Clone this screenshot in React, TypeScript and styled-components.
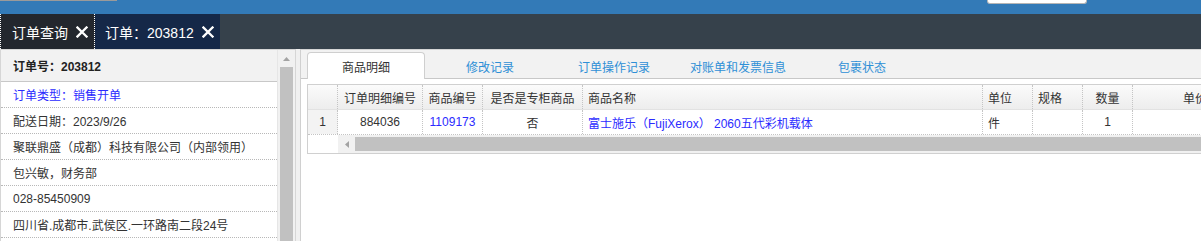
import React from 'react';
import styled, { createGlobalStyle } from 'styled-components';

const GlobalStyle = createGlobalStyle`
  * {
    box-sizing: border-box;
  }

  body {
    margin: 0;
    font-family: 'Liberation Sans', 'Noto Sans CJK SC', sans-serif;
    font-size: 12px;
    color: #333;
    overflow: hidden;
  }
`;

const Page = styled.div`
  width: 1201px;
  height: 241px;
  overflow: hidden;
  background: #f0f0f0;
  display: flex;
  flex-direction: column;
`;

const TopBar = styled.header`
  height: 14px;
  background: #337ab7;
  display: flex;
  align-items: flex-start;
  flex-shrink: 0;
`;

const TopStrip = styled.div`
  width: 117px;
  height: 1px;
  background: #9a9a9a;
`;

const SearchStub = styled.div`
  margin-left: auto;
  margin-right: 114px;
  width: 100px;
  height: 4px;
  background: #fff;
  border: 1px solid #b5b5b5;
  border-top: none;
  border-radius: 0 0 3px 3px;
`;

const TabBar = styled.nav`
  height: 35px;
  background: #36414b;
  display: flex;
  flex-shrink: 0;
`;

const NavTab = styled.div<{ $focused?: boolean; $bg: string }>`
  display: flex;
  align-items: center;
  gap: 8px;
  padding: 0 6px 0 ${(p) => (p.$focused ? '11px' : '10px')};
  background: ${(p) => p.$bg};
  color: #fff;
  font-size: 14px;
  border-left: ${(p) => (p.$focused ? '1px dotted #fff' : 'none')};
  border-right: ${(p) => (p.$focused ? '1px dotted #fff' : 'none')};
`;

const CloseIcon = () => (
  <svg width="12" height="12" viewBox="0 0 12 12">
    <path d="M1.5 1.5 L10.5 10.5 M10.5 1.5 L1.5 10.5" stroke="#fff" strokeWidth="2.3" strokeLinecap="square" />
  </svg>
);

const Main = styled.main`
  flex: 1;
  display: flex;
  gap: 4px;
  min-height: 0;
`;

const InfoPanel = styled.aside`
  width: 296px;
  flex-shrink: 0;
  display: flex;
  background: #fff;
  border: 1px solid #d6d6d6;
  border-bottom: none;
`;

const InfoList = styled.div`
  width: 277px;
  display: flex;
  flex-direction: column;
  overflow: hidden;
  border-right: 1px solid #e6e6e6;
`;

const InfoHeader = styled.div`
  height: 32px;
  flex-shrink: 0;
  display: flex;
  align-items: center;
  padding-left: 12px;
  background: #f2f2f2;
  border-bottom: 1px solid #c8c8c8;
  font-weight: bold;
  color: #222;
`;

const InfoRow = styled.div<{ $link?: boolean }>`
  height: 26px;
  flex-shrink: 0;
  display: flex;
  align-items: center;
  padding-left: 12px;
  border-bottom: 1px dotted #b8b8b8;
  color: ${(p) => (p.$link ? '#2b2bff' : '#333')};
  white-space: nowrap;
`;

const VScroll = styled.div`
  width: 17px;
  display: flex;
  flex-direction: column;
  align-items: center;
  background: #f1f1f1;
`;

const ScrollButton = styled.div<{ $w: number; $h: number }>`
  width: ${(p) => p.$w}px;
  height: ${(p) => p.$h}px;
  flex-shrink: 0;
  display: flex;
  align-items: center;
  justify-content: center;
  background: #f1f1f1;
`;

const VThumb = styled.div`
  width: 13px;
  flex: 1;
  background: #c1c1c1;
`;

const DetailPanel = styled.section`
  flex: 1;
  min-width: 0;
  overflow: hidden;
  background: #fff;
  border-left: 1px solid #d0d0d0;
  border-top: 1px solid #d6d6d6;
  display: flex;
  flex-direction: column;
`;

const TabStrip = styled.div`
  height: 29px;
  flex-shrink: 0;
  display: flex;
  align-items: flex-end;
  padding: 2px 0 0 6px;
  background: #f2f2f2;
  border-bottom: 1px solid #c8c8c8;
`;

const DetailTab = styled.div<{ $active?: boolean }>`
  width: 118px;
  height: 27px;
  margin-right: 6px;
  margin-bottom: -1px;
  flex-shrink: 0;
  display: flex;
  align-items: center;
  justify-content: center;
  color: ${(p) => (p.$active ? '#333' : '#2e8fd6')};
  background: ${(p) => (p.$active ? '#fff' : 'transparent')};
  border: 1px solid ${(p) => (p.$active ? '#cfcfcf' : 'transparent')};
  border-bottom: none;
  border-radius: 4px 4px 0 0;
`;

const DetailBody = styled.div`
  flex: 1;
  padding: 5px 0 0 6px;
`;

const GridBox = styled.div`
  width: 950px;
  border: 1px solid #d0d0d0;
`;

const COLS = '30px 85px 60px 100px 400px 50px 50px 50px 124px';

const GridRow = styled.div<{ $head?: boolean }>`
  display: grid;
  grid-template-columns: ${COLS};
  height: 25px;
  background: ${(p) => (p.$head ? 'linear-gradient(#fbfbfb, #ededed)' : '#fff')};
  border-bottom: 1px ${(p) => (p.$head ? 'solid #e2e2e2' : 'dotted #c4c4c4')};
`;

const Cell = styled.div<{ $align?: 'left' | 'center'; $link?: boolean; $num?: boolean }>`
  display: flex;
  align-items: center;
  justify-content: ${(p) => (p.$align === 'left' ? 'flex-start' : 'center')};
  padding: 0 5px;
  border-right: 1px dotted #c4c4c4;
  white-space: nowrap;
  overflow: hidden;
  color: ${(p) => (p.$link ? '#2b2bff' : '#333')};
  background: ${(p) => (p.$num ? '#f3f3f3' : 'transparent')};

  &:last-child {
    border-right: none;
  }
`;

const HScrollRow = styled.div`
  display: flex;
  height: 18px;
`;

const HScrollSpacer = styled.div`
  width: 30px;
  background: #fff;
`;

const HTrack = styled.div`
  flex: 1;
  display: flex;
  align-items: center;
  background: #f1f1f1;
`;

const HThumb = styled.div`
  flex: 1;
  height: 14px;
  background: #c1c1c1;
`;

const heads: { label: string; align?: 'left' | 'center' }[] = [
  { label: '' },
  { label: '订单明细编号' },
  { label: '商品编号' },
  { label: '是否是专柜商品' },
  { label: '商品名称', align: 'left' },
  { label: '单位', align: 'left' },
  { label: '规格', align: 'left' },
  { label: '数量' },
  { label: '单价' },
];

const infoRows = [
  '配送日期：2023/9/26',
  '聚联鼎盛（成都）科技有限公司（内部领用）',
  '包兴敏，财务部',
  '028-85450909',
  '四川省.成都市.武侯区.一环路南二段24号',
];

const detailTabs = ['商品明细', '修改记录', '订单操作记录', '对账单和发票信息', '包裹状态'];

const App = () => (
  <Page>
    <GlobalStyle />
    <TopBar>
      <TopStrip />
      <SearchStub />
    </TopBar>
    <TabBar>
      <NavTab $focused $bg="#23272e">
        订单查询
        <CloseIcon />
      </NavTab>
      <NavTab $bg="#152848">
        订单：203812
        <CloseIcon />
      </NavTab>
    </TabBar>
    <Main>
      <InfoPanel>
        <InfoList>
          <InfoHeader>订单号：203812</InfoHeader>
          <InfoRow $link>订单类型：销售开单</InfoRow>
          {infoRows.map((r) => (
            <InfoRow key={r}>{r}</InfoRow>
          ))}
          <InfoRow />
        </InfoList>
        <VScroll>
          <ScrollButton $w={17} $h={17}>
            <svg width="7" height="4" viewBox="0 0 7 4">
              <path d="M0 4 L3.5 0 L7 4 Z" fill="#a3a3a3" />
            </svg>
          </ScrollButton>
          <VThumb />
        </VScroll>
      </InfoPanel>
      <DetailPanel>
        <TabStrip>
          {detailTabs.map((t, i) => (
            <DetailTab key={t} $active={i === 0}>
              {t}
            </DetailTab>
          ))}
        </TabStrip>
        <DetailBody>
          <GridBox>
            <GridRow $head>
              {heads.map((h, i) => (
                <Cell key={i} $align={h.align}>
                  {h.label}
                </Cell>
              ))}
            </GridRow>
            <GridRow>
              <Cell $num>1</Cell>
              <Cell>884036</Cell>
              <Cell $link>1109173</Cell>
              <Cell>否</Cell>
              <Cell $align="left" $link>
                富士施乐（FujiXerox） 2060五代彩机载体
              </Cell>
              <Cell $align="left">件</Cell>
              <Cell $align="left" />
              <Cell>1</Cell>
              <Cell />
            </GridRow>
            <HScrollRow>
              <HScrollSpacer />
              <HTrack>
                <ScrollButton $w={17} $h={18}>
                  <svg width="4" height="7" viewBox="0 0 4 7">
                    <path d="M4 0 L0 3.5 L4 7 Z" fill="#a3a3a3" />
                  </svg>
                </ScrollButton>
                <HThumb />
              </HTrack>
            </HScrollRow>
          </GridBox>
        </DetailBody>
      </DetailPanel>
    </Main>
  </Page>
);

export default App;
